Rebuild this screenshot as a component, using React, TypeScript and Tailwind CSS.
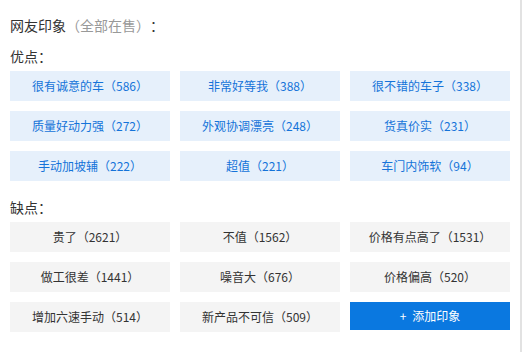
import React from "react";

const pros = [
  "很有诚意的车（586）",
  "非常好等我（388）",
  "很不错的车子（338）",
  "质量好动力强（272）",
  "外观协调漂亮（248）",
  "货真价实（231）",
  "手动加坡辅（222）",
  "超值（221）",
  "车门内饰软（94）",
];

const cons = [
  "贵了（2621）",
  "不值（1562）",
  "价格有点高了（1531）",
  "做工很差（1441）",
  "噪音大（676）",
  "价格偏高（520）",
  "增加六速手动（514）",
  "新产品不可信（509）",
];

export default function App() {
  return (
    <div
      className="relative w-[522px] h-[352px] bg-white overflow-hidden [text-spacing-trim:space-all]"
      style={{ fontFamily: '"Noto Sans CJK SC", "Noto Sans", sans-serif' }}
    >
      <div className="absolute right-0 top-0 h-full w-[2px] bg-[#e2e2e2]" />
      <div className="w-[520px] pt-[15px] px-[10px]">
        <div className="h-[20px] leading-[20px] text-[14px] text-[#333]">
          网友印象<span className="text-[#999]">（全部在售）</span>：
        </div>
        <div className="mt-[11px] h-[20px] leading-[20px] text-[14px] text-[#333]">优点：</div>
        <div className="mt-[5px] grid grid-cols-3 gap-[10px]">
          {pros.map((t) => (
            <div
              key={t}
              className="h-[30px] flex items-center justify-center bg-[#e6f0fb] text-[#1473d9] text-[12px]"
            >
              {t}
            </div>
          ))}
        </div>
        <div className="mt-[16px] h-[20px] leading-[20px] text-[14px] text-[#333]">缺点：</div>
        <div className="mt-[5px] grid grid-cols-3 gap-[10px] items-start">
          {cons.map((t) => (
            <div
              key={t}
              className="h-[30px] flex items-center justify-center bg-[#f4f4f4] text-[#333] text-[12px]"
            >
              {t}
            </div>
          ))}
          <div className="h-[28px] flex items-center justify-center gap-[6px] bg-[#0a78e0] text-white text-[12px]">
            <span>+</span>
            <span>添加印象</span>
          </div>
        </div>
      </div>
    </div>
  );
}
